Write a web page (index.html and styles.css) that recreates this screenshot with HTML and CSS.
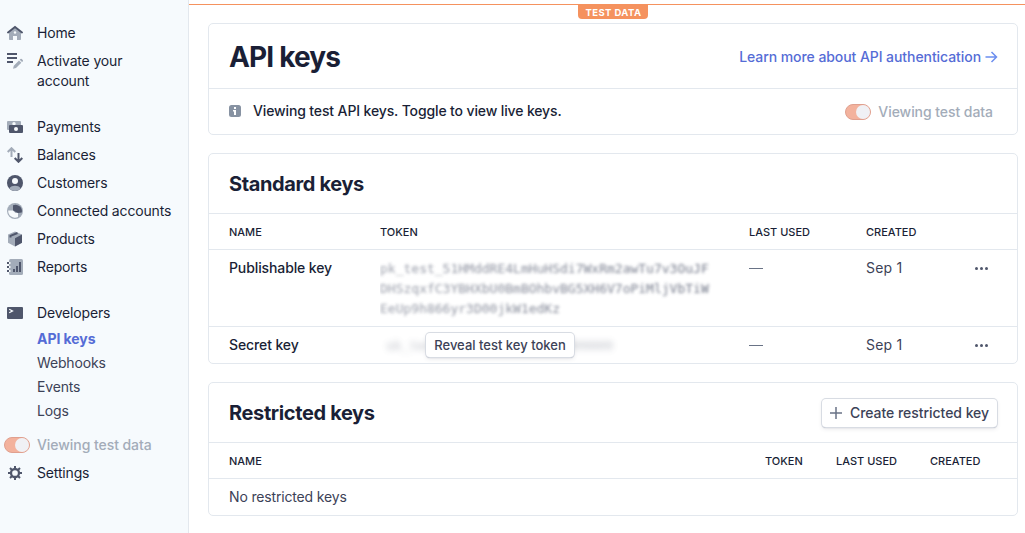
FILE: index.html
```html
<!DOCTYPE html>
<html lang="en">
<head>
<meta charset="utf-8">
<title>API keys</title>
<link rel="stylesheet" href="styles.css">
</head>
<body>
<div class="app">
  <nav class="sidebar">
    <div class="group">
      <a class="item"><svg class="icon" viewBox="0 0 16 16"><path class="soft" d="M2 7l6-5 6 5v7.2a.8.8 0 0 1-.8.8H10v-4H6v4H2.800a.8.8 0 0 1-.8-.8z"/><path class="line" d="M1 7.500L8 1.900l7 5.600" stroke-width="1.900" stroke-linecap="round"/><circle cx="8" cy="7.500" r="1.200" fill="#f7fafc"/></svg><span>Home</span></a>
      <a class="item wrap"><svg class="icon" viewBox="0 0 16 16"><path class="dark" d="M0 0h10v2H0zM0 4h10v2H0zM0 8h6v2H0z"/><path class="soft" d="M6 15.800l.8-3L12 7.500l2.300 2.300L9 15zM12.700 6.800l.7-.7a1 1 0 0 1 1.400 0l.9.900a1 1 0 0 1 0 1.400l-.7.7z"/></svg><span>Activate your account</span></a>
    </div>
    <div class="group">
      <a class="item"><svg class="icon" viewBox="0 0 16 16"><rect class="soft" y="2" width="14" height="9" rx="1"/><circle cx="7" cy="4.800" r="1.700" fill="#f7fafc"/><rect class="dark" x="2" y="6" width="14" height="8" rx="1"/><circle cx="9" cy="10" r="2" fill="#f7fafc"/></svg><span>Payments</span></a>
      <a class="item"><svg class="icon" viewBox="0 0 16 16"><path class="line pale" d="M4.500 10V1.500M.7 5l3.800-3.800L8.300 5" stroke-width="2"/><path class="line" d="M11.500 6v8.500M7.700 11l3.800 3.800 3.800-3.800" stroke-width="2"/></svg><span>Balances</span></a>
      <a class="item"><svg class="icon" viewBox="0 0 16 16"><circle class="dark" cx="8" cy="8" r="8"/><circle cx="8" cy="6" r="3" fill="#f7fafc"/><path class="soft" d="M2.200 13.500c1.300-2 3.500-2.700 5.800-2.700s4.500.7 5.800 2.700A8 8 0 0 1 2.200 13.500z"/></svg><span>Customers</span></a>
      <a class="item"><svg class="icon" viewBox="0 0 16 16"><circle class="soft" cx="8" cy="8" r="8"/><path class="dark" d="M6 2.200A6.500 6.500 0 0 1 14.800 9.500L11 10 6 7.500z"/><path d="M1.200 7.500H6L8.500 10H11v4A6.800 6.800 0 0 1 1.200 7.500z" fill="#f7fafc"/></svg><span>Connected accounts</span></a>
      <a class="item"><svg class="icon" viewBox="0 0 16 16"><path class="soft" d="M8 .5l7 3v8.300L8 15.500l-7-3.700V3.500z"/><path class="dark" d="M8 7.200l7-3.700v8.300L8 15.500z"/><path class="line" d="M3.500 6.500V4.900L10.500 2" stroke-width="2"/></svg><span>Products</span></a>
      <a class="item"><svg class="icon" viewBox="0 0 16 16"><rect class="soft" x="2" width="14" height="16" rx="1.500"/><path class="dark" d="M6 10h2v3H6zM9 7h2v6H9zM12 3h2v10h-2z"/><path class="dark" d="M0 3h2v2H0zM0 7h2v2H0zM0 11h2v2H0z"/><path d="M2 3h1.500v2H2zM2 7h1.500v2H2zM2 11h1.500v2H2z" fill="#f7fafc"/></svg><span>Reports</span></a>
    </div>
    <div class="group">
      <a class="item"><svg class="icon" viewBox="0 0 16 16"><rect class="dark" y="2" width="16" height="12" rx="1"/><path d="M2.200 4.200L5.500 6 2.200 7.800" fill="none" stroke="#f7fafc" stroke-width="1.300"/></svg><span>Developers</span></a>
      <a class="sub active">API keys</a>
      <a class="sub">Webhooks</a>
      <a class="sub">Events</a>
      <a class="sub">Logs</a>
    </div>
    <div class="group tail">
      <div class="item mode"><span class="toggle"></span><span>Viewing test data</span></div>
      <a class="item"><svg class="icon" viewBox="0 0 16 16"><circle class="line" cx="8" cy="8" r="4" stroke-width="2.300"/><path class="line" d="M8 1v3M8 12v3M1 8h3M12 8h3M3 3l2 2M11 11l2 2M3 13l2-2M11 5l2-2" stroke-width="2"/></svg><span>Settings</span></a>
    </div>
  </nav>

  <main class="main">
    <div class="testbar"><span class="testtag">TEST DATA</span></div>

    <section class="card">
      <header class="head title">
        <h1>API keys</h1>
        <a class="learn">Learn more about API authentication<svg width="13" height="12" viewBox="0 0 13 12"><path d="M.5 6h11M6.500 1l5 5-5 5" fill="none" stroke="#6c8eef" stroke-width="1.500"/></svg></a>
      </header>
      <div class="notice">
        <svg width="12" height="12" viewBox="0 0 12 12"><rect width="12" height="12" rx="2.500" fill="#8792a2"/><path d="M5 2h2v2H5zM4 5h3v5H5V6.500H4z" fill="#fff"/></svg>
        <span class="strong">Viewing test API keys. Toggle to view live keys.</span>
        <span class="mode right"><span class="toggle"></span><span>Viewing test data</span></span>
      </div>
    </section>

    <section class="card">
      <header class="head"><h2>Standard keys</h2></header>
      <div class="row cols labels"><span>NAME</span><span>TOKEN</span><span>LAST USED</span><span>CREATED</span></div>
      <div class="row cols tall">
        <span class="strong">Publishable key</span>
        <code class="token">pk_test_51HMddRE4LmHuHSdi7WxRm2awTu7v3OuJF<br>DHSzqxfC3YBHXbU0BmBOhbvBG5XH6V7oPiMljVbTiW<br>EeUp9h866yr3D00jkW1edKz</code>
        <span><i class="dash"></i></span><span class="date">Sep 1</span><span class="dots"><i></i><i></i><i></i></span>
      </div>
      <div class="row cols">
        <span class="strong">Secret key</span>
        <div class="secret"><code>sk_test_000000000000000000000</code><button class="button reveal">Reveal test key token</button></div>
        <span><i class="dash"></i></span><span class="date">Sep 1</span><span class="dots"><i></i><i></i><i></i></span>
      </div>
    </section>

    <section class="card">
      <header class="head"><h2>Restricted keys</h2><button class="button create"><svg width="12" height="12" viewBox="0 0 12 12"><path d="M6 0v12M0 6h12" stroke="#697386" stroke-width="1.500"/></svg>Create restricted key</button></header>
      <div class="row restricted labels"><span>NAME</span><span>TOKEN</span><span>LAST USED</span><span>CREATED</span></div>
      <div class="row"><span class="empty">No restricted keys</span></div>
    </section>
  </main>
</div>
</body>
</html>
```
FILE: styles.css
```css
* { box-sizing: border-box; }
body {
  margin: 0;
  font: 14px/20px Inter, "Liberation Sans", sans-serif;
  color: #3c4257;
  background: #fff;
}
h1, h2 { margin: 0; color: #1a1f36; font-weight: 700; }
.app { display: flex; height: 533px; overflow: hidden; }

.sidebar {
  flex: none;
  width: 189px;
  padding-top: 19px;
  background: #f6fafd;
  border-right: 1px solid #e3e8ee;
  color: #1a1f36;
  letter-spacing: -.16px;
}
.group { margin-bottom: 18px; }
.item { display: flex; gap: 14px; padding: 4px 16px 4px 7px; white-space: nowrap; }
.item.wrap { white-space: normal; }
.icon { flex: none; width: 16px; height: 16px; margin-top: 2px; }
.soft { fill: #a3acb9; }
.dark { fill: #4f566b; }
.line { fill: none; stroke: #4f566b; }
.line.pale { stroke: #a3acb9; }
.sub { display: block; padding: 2px 0 2px 37px; color: #3c4257; }
.sub.active { color: #556cd6; font-weight: 700; letter-spacing: -.05px; }
.group:nth-child(3) { margin-bottom: 8px; }
.mode { display: flex; align-items: center; gap: 7px; color: #a3acb9; font-weight: 500; letter-spacing: -.06px; }
.item.mode { padding-left: 4px; }
.toggle {
  flex: none;
  display: flex;
  justify-content: flex-end;
  width: 26px;
  height: 16px;
  border: 1px solid #e0a08f;
  border-radius: 8px;
  background: #f3b29d;
}
.toggle::after { content: ""; width: 14px; height: 14px; border-radius: 50%; background: #f0f1f5; }

.main { flex: 1; padding: 4px 7px 0 19px; }
.testbar {
  display: flex;
  justify-content: center;
  height: 19px;
  margin: 0 -7px 0 -19px;
  padding-left: 12px;
  border-top: 1px solid #f5925e;
}
.testtag {
  height: 14px;
  padding: 0 7px 0 8px;
  border-radius: 0 0 4px 4px;
  background: #f5925e;
  color: #fff;
  font-size: 9.5px;
  font-weight: 700;
  line-height: 15px;
  letter-spacing: .4px;
}
.card { margin-bottom: 18px; border: 1px solid #e3e8ee; border-radius: 5px; }
.head { display: flex; align-items: center; justify-content: space-between; height: 59px; padding: 0 19px 0 20px; }
.head h2 { padding-top: 1px; font-size: 20px; line-height: 28px; letter-spacing: -.37px; }
.head.title { height: 64px; }
.head h1 { padding-top: 2px; font-size: 28px; line-height: 36px; letter-spacing: -.85px; }
.learn { display: flex; align-items: center; gap: 4px; padding-top: 2px; color: #556cd6; font-weight: 500; letter-spacing: -.07px; }
.notice { display: flex; align-items: center; height: 46px; padding: 0 24px 2px 20px; border-top: 1px solid #e3e8ee; }
.notice .strong { margin-left: 12px; letter-spacing: -.13px; }
.strong { color: #1a1f36; font-weight: 500; letter-spacing: -.11px; }
.right { margin-left: auto; padding-top: 2px; }

.row { padding: 8px 0 8px 20px; border-top: 1px solid #e3e8ee; }
.labels { height: 36px; color: #1a1f36; font-size: 11px; font-weight: 500; }
.cols { display: grid; grid-template-columns: 151px 369px 117px 108.5px 1fr; }
.tall { height: 77px; }
.restricted { display: grid; grid-template-columns: 536px 71px 94px 1fr; }
.token, .secret code { font: 13px/20px "DejaVu Sans Mono", monospace; color: #4f566b; }
.token {
  width: 340px;
  padding-top: 1px;
  filter: blur(1.4px);
  opacity: .85;
  -webkit-mask-image: linear-gradient(100deg, rgb(0 0 0 / .65), #000);
  mask-image: linear-gradient(100deg, rgb(0 0 0 / .65), #000);
}
.date { letter-spacing: .2px; }
.empty { letter-spacing: -.16px; }
.dash { display: block; width: 14px; height: 1px; margin-top: 10px; background: #697386; }
.dots { display: flex; gap: 2px; padding-top: 9px; }
.dots i { width: 3px; height: 3px; border-radius: 50%; background: #4f566b; }
.secret { position: relative; height: 20px; padding-left: 6px; }
.secret code { filter: blur(3px); opacity: .4; }
.button {
  display: flex;
  align-items: center;
  justify-content: center;
  padding: 0;
  border: 0;
  border-radius: 4px;
  background: #fff;
  color: #3c4257;
  font: 500 14px/20px Inter, sans-serif;
  box-shadow: 0 0 0 1px #d8dce3, 0 1px 1px 0 #a9afbb, 0 2px 4px #3c425720;
}
.create { width: 175px; height: 28px; margin-right: 1px; gap: 8px; letter-spacing: -.04px; }
.reveal { position: absolute; left: 46px; top: -2px; width: 148px; height: 24px; font-size: 13px; }
```
